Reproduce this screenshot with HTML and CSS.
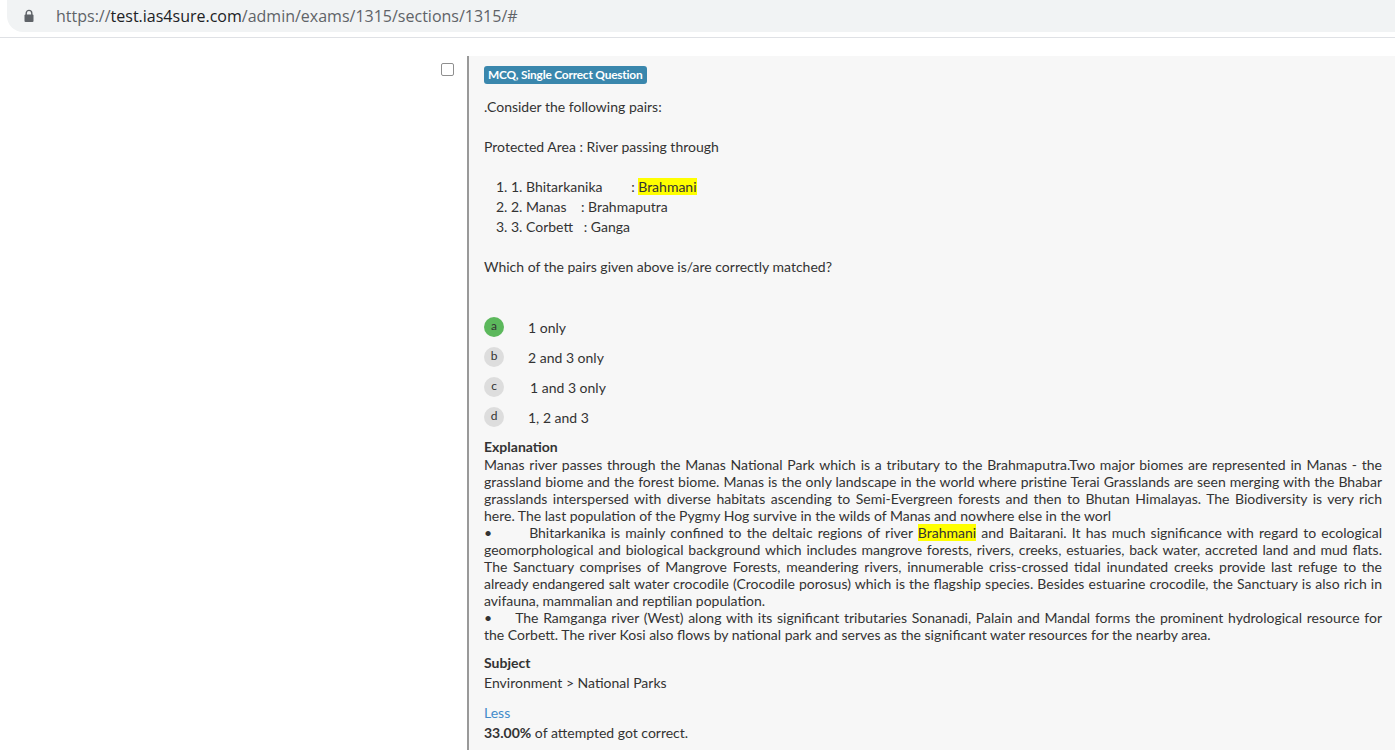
FILE: index.html
```html
<!DOCTYPE html>
<html lang="en">
<head>
<meta charset="utf-8">
<title>Exam section</title>
<link rel="stylesheet" href="styles.css">
</head>
<body>
<header class="chrome">
  <div class="omnibox">
    <svg class="lock" width="12" height="14" viewBox="0 0 12 14" aria-hidden="true"><path d="M3.2 6V4.2a2.8 2.8 0 0 1 5.6 0V6" fill="none" stroke="#5f6368" stroke-width="1.4"/><rect x="1.5" y="5.6" width="9" height="7.4" rx="1" fill="#5f6368"/></svg>
    <span class="url"><span class="url-dim">https://</span>test.ias4sure.com<span class="url-dim">/admin/exams/1315/sections/1315/#</span></span>
  </div>
</header>
<main class="page">
  <div class="check-col"><span class="checkbox"></span></div>
  <article class="panel">
    <div class="tag-row"><span class="tag">MCQ, Single Correct Question</span></div>
    <p class="q-line first">.Consider the following pairs:</p>
    <p class="q-line gap">Protected Area : River passing through</p>
    <ol class="pairs">
      <li>1. Bhitarkanika &nbsp; &nbsp; &nbsp; &nbsp;: <mark>Brahmani</mark></li>
      <li>2. Manas &nbsp; &nbsp;: Brahmaputra</li>
      <li>3. Corbett &nbsp; : Ganga</li>
    </ol>
    <p class="q-line gap">Which of the pairs given above is/are correctly matched?</p>
    <div class="options">
      <div class="option"><span class="bullet correct">a</span><span class="opt-text">1 only</span></div>
      <div class="option"><span class="bullet">b</span><span class="opt-text">2 and 3 only</span></div>
      <div class="option"><span class="bullet">c</span><span class="opt-text shift">1 and 3 only</span></div>
      <div class="option"><span class="bullet">d</span><span class="opt-text">1, 2 and 3</span></div>
    </div>
    <h4 class="label expl-label">Explanation</h4>
    <div class="explanation">
      <p>Manas river passes through the Manas National Park which is a tributary to the Brahmaputra.Two major biomes are represented in Manas - the grassland biome and the forest biome. Manas is the only landscape in the world where pristine Terai Grasslands are seen merging with the Bhabar grasslands interspersed with diverse habitats ascending to Semi-Evergreen forests and then to Bhutan Himalayas. The Biodiversity is very rich here. The last population of the Pygmy Hog survive in the wilds of Manas and nowhere else in the worl</p>
      <p>•<span class="tab-wide"></span>Bhitarkanika is mainly confined to the deltaic regions of river <mark>Brahmani</mark> and Baitarani. It has much significance with regard to ecological geomorphological and biological background which includes mangrove forests, rivers, creeks, estuaries, back water, accreted land and mud flats. The Sanctuary comprises of Mangrove Forests, meandering rivers, innumerable criss-crossed tidal inundated creeks provide last refuge to the already endangered salt water crocodile (Crocodile porosus) which is the flagship species. Besides estuarine crocodile, the Sanctuary is also rich in avifauna, mammalian and reptilian population.</p>
      <p>•<span class="tab-narrow"></span>The Ramganga river (West) along with its significant tributaries Sonanadi, Palain and Mandal forms the prominent hydrological resource for the Corbett. The river Kosi also flows by national park and serves as the significant water resources for the nearby area.</p>
    </div>
    <h4 class="label subj-label">Subject</h4>
    <p class="subject">Environment &gt; National Parks</p>
    <a class="less" href="#">Less</a>
    <p class="stat"><strong>33.00%</strong> of attempted got correct.</p>
  </article>
</main>
</body>
</html>
```

FILE: styles.css
```css
* { box-sizing: border-box; }
html, body { margin: 0; height: 750px; overflow: hidden; background: #fff; }
body { font-family: Lato, "Noto Sans", sans-serif; font-size: 14px; color: #333; }
p, h4, ol { margin: 0; }
.chrome { height: 38px; padding-left: 7px; border-bottom: 1px solid #dfe1e5; }
.omnibox { height: 32px; display: flex; align-items: center; padding-left: 16px; background: #f1f3f4; border-radius: 0 0 0 16px; }
.lock { flex: none; margin-right: 21px; }
.url { font-family: "Open Sans", sans-serif; font-size: 16px; color: #202124; }
.url-dim { color: #5f6368; }
.page { display: flex; height: 712px; padding: 18px 0 0 441px; }
.check-col { width: 26px; flex: none; padding-top: 7px; }
.checkbox { display: block; width: 13px; height: 13px; background: #fff; border: 1px solid #8f8f8f; border-radius: 2px; }
.panel { flex: 1; background: #f7f7f7; border-left: 2px solid #999; padding: 10px 13px 0 15px; }
.tag-row { height: 18px; display: flex; }
.tag { background: #3a87ad; color: #fff; font-size: 11.9px; font-weight: 700; line-height: 18px; padding: 0 4px; border-radius: 3px; white-space: nowrap; letter-spacing: -0.2px; }
.q-line { line-height: 20px; }
.q-line.first { margin-top: 13px; }
.q-line.gap { margin-top: 20px; }
.pairs { list-style: decimal; padding-left: 27px; margin-top: 20px; }
.pairs li { line-height: 20px; }
mark { background: #ff0; color: inherit; }
.options { margin-top: 35px; display: flex; flex-direction: column; }
.option { height: 30px; display: flex; align-items: center; }
.bullet { width: 20px; height: 20px; flex: none; border-radius: 50%; background: #ddd; text-align: center; line-height: 18px; font-size: 12px; }
.bullet.correct { background: #5cb85c; }
.opt-text { margin-left: 24px; }
.opt-text.shift { margin-left: 26px; }
.label { font-size: 14px; font-weight: 700; line-height: 20px; }
.expl-label { margin-top: 5px; }
.explanation { line-height: 17px; text-align: justify; margin-top: -1px; }
.tab-wide { display: inline-block; width: 37px; }
.tab-narrow { display: inline-block; width: 23px; }
.subj-label { margin-top: 10px; }
.subject { line-height: 20px; }
.less { display: block; margin-top: 10px; color: #428bca; text-decoration: none; line-height: 20px; }
.stat { line-height: 20px; }
.stat strong { font-weight: 700; }
```
